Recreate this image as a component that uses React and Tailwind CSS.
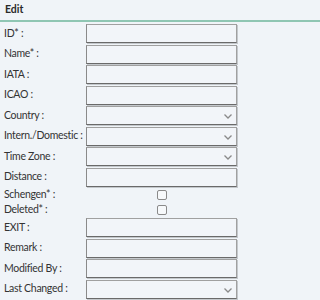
import React from "react";

const Chevron = () => (
  <svg width="8" height="5" viewBox="0 0 8 5" className="absolute right-[4px] top-[7px]">
    <path d="M0.5 0.5 L4 4 L7.5 0.5" fill="none" stroke="#8a8a8a" strokeWidth="1.3" />
  </svg>
);

const Input = ({ select }) => (
  <div className="relative w-[151px] h-[19px] bg-[#f2f5f9] border border-[#a0a0a0] border-l-[#8a8a8a] border-b-[#6a6a6a] shadow-[1px_1px_0_#c4c8cc]">
    {select && <Chevron />}
  </div>
);

const Row = ({ label, select }) => (
  <div className="flex items-center h-[20.5px]">
    <div className="w-[86px] pl-[4px] whitespace-nowrap">{label}</div>
    <Input select={select} />
  </div>
);

const CheckRow = ({ label }) => (
  <div className="flex items-center h-[15px]">
    <div className="w-[157px] pl-[4px] whitespace-nowrap">{label}</div>
    <div className="w-[10px] h-[10px] rounded-[2px] border border-[#8a8a8a] bg-[#f7f9fb]" />
  </div>
);

export default function App() {
  return (
    <div className="w-full min-h-screen bg-[#f0f4f8] text-[#333] text-[10.5px] tracking-[-0.3px]" style={{ fontFamily: "Lato, 'Open Sans', sans-serif" }}>
      <div className="h-[20px] flex items-center pl-[5px] font-bold text-[#2a2a2a] tracking-normal">Edit</div>
      <div className="h-[2px] bg-[#8fc6b3]" />
      <div className="pt-[1.5px]">
        <Row label="ID* :" />
        <Row label="Name* :" />
        <Row label="IATA :" />
        <Row label="ICAO :" />
        <Row label="Country :" select />
        <Row label="Intern./Domestic :" select />
        <Row label="Time Zone :" select />
        <Row label="Distance :" />
        <CheckRow label="Schengen* :" />
        <CheckRow label="Deleted* :" />
        <Row label="EXIT :" />
        <Row label="Remark :" />
        <Row label="Modified By :" />
        <Row label="Last Changed :" select />
      </div>
    </div>
  );
}
